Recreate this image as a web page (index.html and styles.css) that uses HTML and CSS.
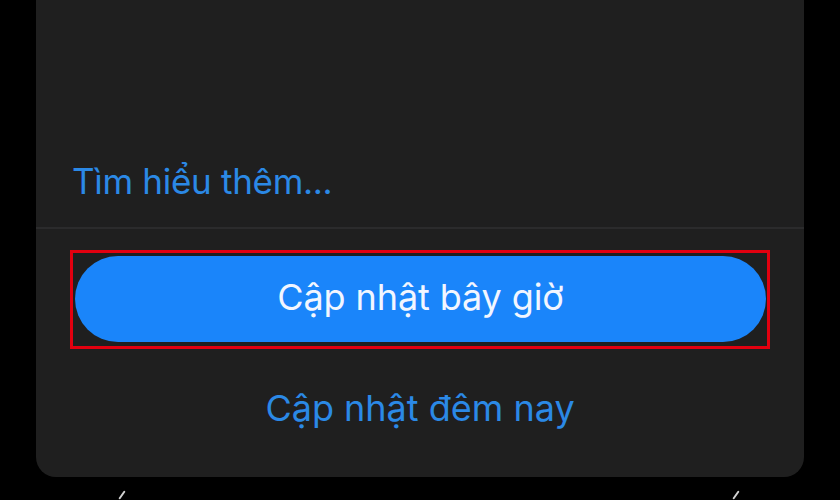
FILE: index.html
```html
<!DOCTYPE html>
<html lang="vi">
<head>
<meta charset="utf-8">
<title>Cập nhật phần mềm</title>
<link rel="stylesheet" href="styles.css">
</head>
<body>
<div class="screen">
  <div class="sheet">
    <div class="top">
      <a class="learn">Tìm hiểu thêm...</a>
    </div>
    <div class="divider"></div>
    <div class="highlight">
      <button class="primary">Cập nhật bây giờ</button>
    </div>
    <a class="secondary">Cập nhật đêm nay</a>
  </div>
  <div class="below">
    <span class="mark first"></span>
    <span class="mark second"></span>
  </div>
</div>
</body>
</html>
```
FILE: styles.css
```css
html, body {
  margin: 0;
  padding: 0;
  background: #000;
}
body {
  width: 840px;
  height: 500px;
  overflow: hidden;
  font-family: Inter, "Liberation Sans", Arial, sans-serif;
}
.screen {
  display: flex;
  flex-direction: column;
  height: 500px;
}
.sheet {
  margin: 0 36px;
  height: 477px;
  background: #1f1f1f;
  border-radius: 0 0 20px 20px;
  display: flex;
  flex-direction: column;
}
.top {
  height: 227px;
  display: flex;
  align-items: flex-end;
  padding: 0 0 24px 36px;
  box-sizing: border-box;
}
.learn {
  font-size: 35px;
  line-height: 44px;
  color: #2b89e6;
  letter-spacing: -0.3px;
}
.divider {
  height: 2px;
  background: #2b2b2c;
}
.highlight {
  margin: 21px 0 0 34px;
  width: 700px;
  height: 99px;
  box-sizing: border-box;
  border: 3px solid #e3000f;
  padding: 3px 1px 4px 2px;
  display: flex;
}
.primary {
  flex: 1;
  border: none;
  border-radius: 43px;
  background: #1a85fa;
  color: #f2f6ff;
  font-family: inherit;
  font-size: 36px;
  letter-spacing: -0.1px;
  padding: 0 0 4px;
}
.secondary {
  margin-top: 37px;
  text-align: center;
  font-size: 36px;
  line-height: 44px;
  color: #2b89e6;
  letter-spacing: 0;
}
.below {
  display: flex;
  align-items: flex-end;
  height: 23px;
}
.mark {
  width: 2px;
  height: 10px;
  background: #d0d0d0;
  border-radius: 1px;
  transform: rotate(35deg);
}
.mark.first {
  margin-left: 121px;
}
.mark.second {
  margin-left: 612px;
}
```
